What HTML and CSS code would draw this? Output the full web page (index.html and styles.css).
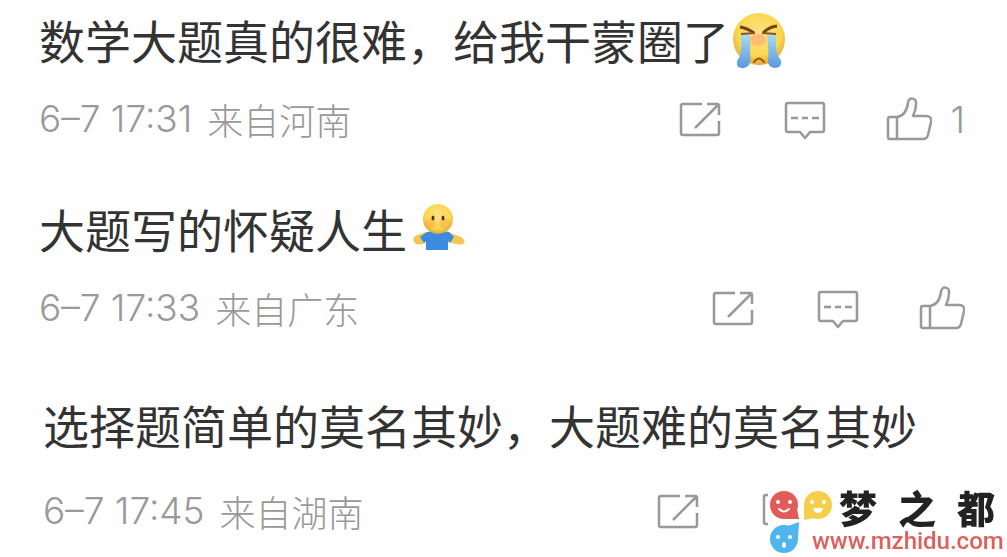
FILE: index.html
```
<!DOCTYPE html>
<html lang="zh-CN">
<head>
    <meta charset="UTF-8">
    <meta name="viewport" content="width=device-width, initial-scale=1.0">
    <title>评论</title>
    <link rel="stylesheet" href="styles.css">
</head>
<body>

    <!-- shared icons -->
    <svg class="sprite" aria-hidden="true">
        <symbol id="share" viewBox="0 0 42 46">
            <path d="M23 7H4Q2 7 2 9V36Q2 38 4 38H38Q40 38 40 36V24M28 7H38Q40 7 40 9V18M16 31L39 8"/>
        </symbol>
        <symbol id="comment" viewBox="0 0 42 46">
            <path d="M4 6H38Q40 6 40 8V33Q40 35 38 35H26L21 41L16 35H4Q2 35 2 33V8Q2 6 4 6ZM7 21H14M18 21H24M28 21H35"/>
        </symbol>
        <symbol id="like" viewBox="0 0 46 46">
            <path d="M2 22Q2 20 4 20H11C18 19 21 13 22 6C22 0 31 0 30 7C30 11 29 15 27 19H40Q46 19 45 25L42 38Q41 42 37 42H4Q2 42 2 40ZM11 20V42"/>
        </symbol>
    </svg>

    <main class="comments">
        <article class="comment">
            <p class="text">数学大题真的很难，给我干蒙圈了<svg class="emoji" viewBox="0 0 60 60" role="img" aria-label="泪">
                <defs>
                    <radialGradient id="face" cx="50%" cy="40%" r="60%">
                        <stop offset="0" stop-color="#ffe08a"/>
                        <stop offset="0.7" stop-color="#fad84f"/>
                        <stop offset="1" stop-color="#dda93a"/>
                    </radialGradient>
                    <linearGradient id="tear" x1="0" y1="0" x2="0" y2="1">
                        <stop offset="0" stop-color="#a9dcf0"/>
                        <stop offset="1" stop-color="#5b97dc"/>
                    </linearGradient>
                </defs>
                <circle cx="30" cy="30" r="26" fill="url(#face)"/>
                <ellipse cx="29" cy="31" rx="8" ry="6" fill="#ff9b70" opacity="0.5"/>
                <path d="M12 25H21V46Q22 52 20 56Q16 61 9 58Q6 53 11 47Q13 37 12 25Z" fill="url(#tear)"/>
                <path d="M38 25H47Q46 39 49 47Q55 54 50 58Q42 61 39 54Q40 39 38 25Z" fill="url(#tear)"/>
                <path d="M11 18Q18 19 25 24M48 17Q40 18 34 24" stroke="#704313" stroke-width="3" fill="none"/>
                <path d="M12 25L26 24M33 24L47 25" stroke="#8b571c" stroke-width="2" fill="none"/>
                <path d="M25 53Q30 46 35 53" stroke="#9c5422" stroke-width="2" fill="none" stroke-linecap="round"/>
            </svg></p>
            <div class="meta">
                <span class="from"><time>6–7 17:31</time>来自河南</span>
                <div class="actions">
                    <button aria-label="转发"><svg class="icon"><use href="#share"/></svg></button>
                    <button aria-label="评论"><svg class="icon"><use href="#comment"/></svg></button>
                    <button class="like" aria-label="赞"><svg class="icon"><use href="#like"/></svg><span class="count">1</span></button>
                </div>
            </div>
        </article>

        <article class="comment">
            <p class="text">大题写的怀疑人生<svg class="emoji" viewBox="0 0 60 60" role="img" aria-label="摊手">
                <path d="M19 34L8 38Q4 42 9 46Q13 48 22 43ZM41 34L54 39Q60 43 56 46Q52 48 40 43Z" fill="#f3c653"/>
                <path d="M20 34Q31 31 42 34L47 39L43 45L41 43V52H19V43L17 45L13 39Z" fill="#3d8be0"/>
                <circle cx="31" cy="21" r="15" fill="url(#face)"/>
                <ellipse cx="23" cy="26" rx="6" ry="5" fill="#ff9d3c" opacity="0.4"/>
                <ellipse cx="38" cy="26" rx="6" ry="5" fill="#ff9d3c" opacity="0.4"/>
                <ellipse cx="26" cy="20" rx="1.5" ry="2.5" fill="#55351a"/>
                <ellipse cx="36" cy="20" rx="1.5" ry="2.5" fill="#55351a"/>
            </svg></p>
            <div class="meta">
                <span class="from"><time>6–7 17:33</time>来自广东</span>
                <div class="actions">
                    <button aria-label="转发"><svg class="icon"><use href="#share"/></svg></button>
                    <button aria-label="评论"><svg class="icon"><use href="#comment"/></svg></button>
                    <button class="like" aria-label="赞"><svg class="icon"><use href="#like"/></svg></button>
                </div>
            </div>
        </article>

        <article class="comment last">
            <p class="text">选择题简单的莫名其妙，大题难的莫名其妙</p>
            <div class="meta">
                <span class="from"><time>6–7 17:45</time>来自湖南</span>
                <div class="actions">
                    <button aria-label="转发"><svg class="icon"><use href="#share"/></svg></button>
                    <button aria-label="评论"><svg class="icon"><use href="#comment"/></svg></button>
                    <button class="like" aria-label="赞"><svg class="icon"><use href="#like"/></svg></button>
                </div>
            </div>
        </article>
    </main>

    <!-- site mark in the corner -->
    <div class="watermark">
        <svg class="logo" viewBox="0 0 66 68" aria-hidden="true">
            <g fill="#e25b57"><circle cx="16" cy="16" r="14"/><path d="M29 20L31 30L18 30Z"/></g>
            <g fill="#f5cf4b"><circle cx="50" cy="16" r="14"/><path d="M36 18L36 31L46 29Z"/></g>
            <g fill="#4fb5ee"><circle cx="16" cy="50" r="14"/><path d="M20 37L31 33L30 49Z"/></g>
            <g fill="#fff">
                <circle cx="10" cy="13" r="2"/><circle cx="22" cy="13" r="2"/>
                <circle cx="44" cy="13" r="2"/><circle cx="56" cy="13" r="2"/>
                <circle cx="10" cy="48" r="2"/><circle cx="22" cy="48" r="2"/>
                <ellipse cx="16" cy="56" rx="2" ry="3"/>
                <path d="M45 19H55Q54 24 50 24T45 19Z"/>
            </g>
            <path d="M11 20Q16 25 21 20" fill="none" stroke="#fff" stroke-width="2" stroke-linecap="round"/>
        </svg>
        <div class="site">
            <div class="name"><span>梦</span><span>之</span><span>都</span></div>
            <a href="#">www.mzhidu.com</a>
        </div>
    </div>

</body>
</html>
```
FILE: styles.css
```
body {
    margin: 0;
    background-color: #fefefe;
    color: #333;
    font-family: "Noto Sans CJK SC", sans-serif;
}
.sprite {
    position: absolute;
    width: 0;
    height: 0;
}
.comments {
    padding: 9px 42px 0 39px;
}
.comment {
    margin-bottom: 54px;
}
.comment.last {
    margin-bottom: 0;
    padding-top: 7px;
    padding-left: 4px;
}
.text {
    display: flex;
    align-items: center;
    margin: 0;
    height: 60px;
    font-size: 46px;
    line-height: 60px;
    white-space: nowrap;
}
.emoji {
    width: 60px;
    height: 60px;
}
.meta {
    display: flex;
    justify-content: space-between;
    align-items: center;
    height: 48px;
    margin-top: 27px;
    color: #999;
    font-size: 36px;
    font-weight: 300;
    line-height: 48px;
}
.last .meta {
    margin-top: 34px;
}
.from {
    display: flex;
    gap: 15px;
    padding-bottom: 2px;
    white-space: nowrap;
}
time,
.count {
    font-family: Inter, sans-serif;
    font-size: 37px;
    font-weight: 300;
}
.actions {
    display: flex;
    align-items: center;
    gap: 63px;
}
.last .actions {
    padding-right: 55px;
}
.actions button {
    display: flex;
    align-items: center;
    gap: 18px;
    padding: 0;
    border: none;
    background: none;
    color: #999;
    line-height: 46px;
}
.icon {
    width: 42px;
    height: 46px;
    fill: none;
    stroke: #999;
    stroke-width: 2.5;
    stroke-linejoin: round;
}
.actions .like {
    margin-left: -3px;
}
.like .icon {
    width: 46px;
}
.watermark {
    position: fixed;
    right: 0;
    bottom: 0;
    display: flex;
    width: 239px;
    height: 68px;
    background-color: #fefefe;
}
.logo {
    flex: none;
    width: 66px;
    height: 68px;
}
.site {
    display: flex;
    flex-direction: column;
}
.name {
    display: flex;
    gap: 21px;
    padding-left: 5px;
    color: #222;
    font-size: 38px;
    font-weight: 900;
    line-height: 36px;
}
.site a {
    margin-left: -22px;
    color: #e0605c;
    font-family: Roboto, sans-serif;
    font-size: 24px;
    font-weight: 500;
    line-height: 32px;
    text-decoration: none;
}
```
